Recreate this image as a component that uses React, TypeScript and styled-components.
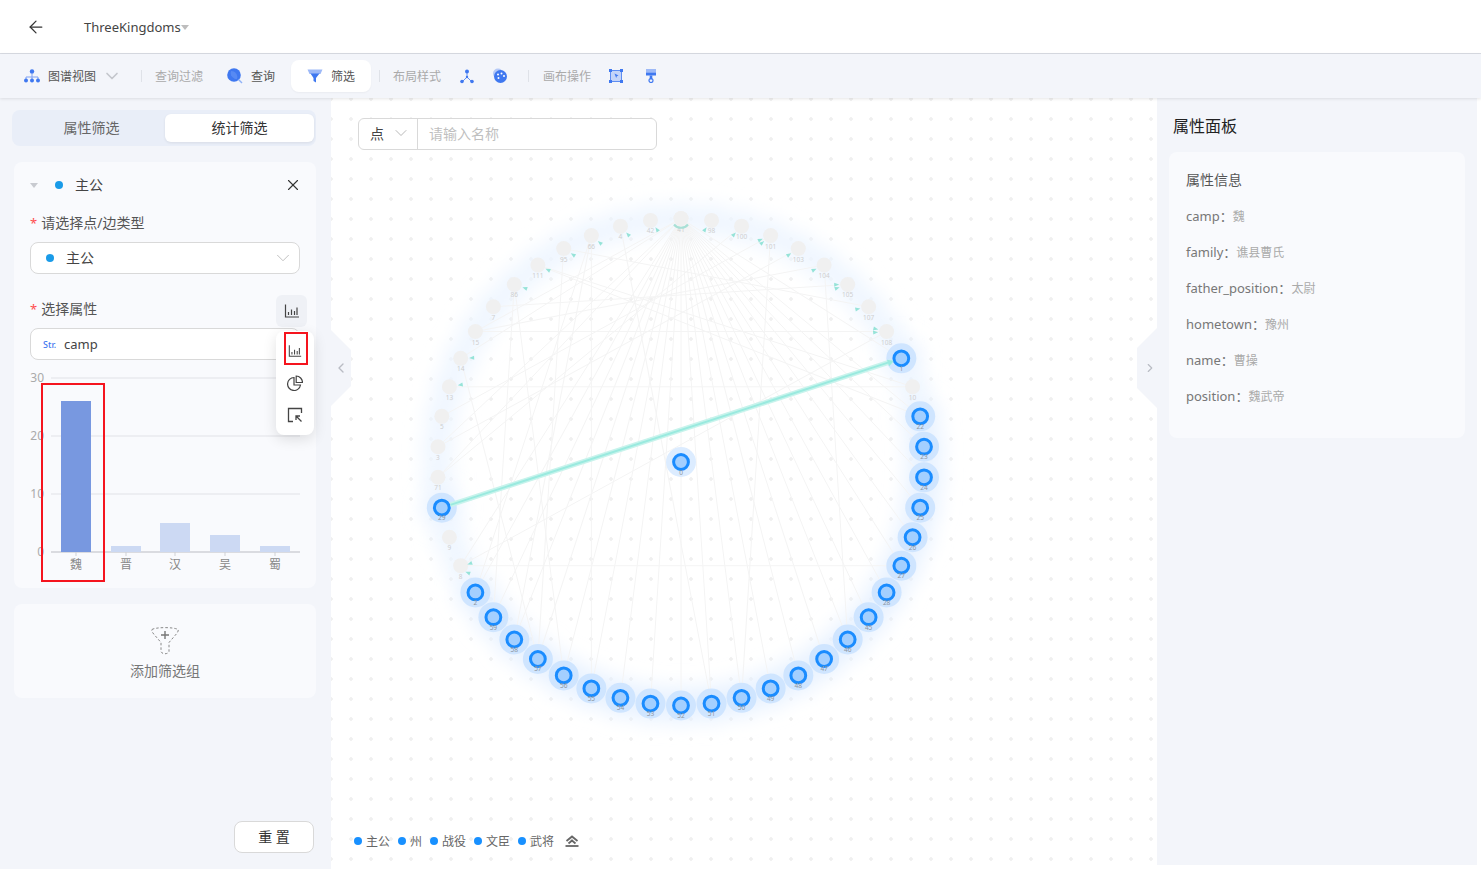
import React from 'react';
import styled, {createGlobalStyle} from 'styled-components';
import {ArrowLeft, ChevronDown, ChevronLeft, ChevronRight, X} from 'lucide-react';

const fontStack = `"Noto Sans", "Noto Sans CJK SC", sans-serif`;

const GlobalStyle = createGlobalStyle`
  html, body {
    margin: 0;
    padding: 0;
    height: 100%;
    background: #fff;
    font-family: ${fontStack};
  }
  * {
    box-sizing: border-box;
  }
`;

const Page = styled.div`
  width: 1481px;
  height: 869px;
  overflow: hidden;
  display: flex;
  flex-direction: column;
  color: #333;
`;

const Header = styled.header`
  height: 54px;
  flex: none;
  display: flex;
  align-items: center;
  padding-left: 26px;
  background: #fff;
  border-bottom: 1px solid #d8dbe2;
`;

const GraphName = styled.div`
  margin-left: 38px;
  font-size: 13px;
  color: #444;
  display: flex;
  align-items: center;
`;

const Caret = styled.span<{$color?: string}>`
  width: 0;
  height: 0;
  margin-top: 1px;
  border-left: 4px solid transparent;
  border-right: 4px solid transparent;
  border-top: 5px solid ${p => p.$color || '#bdbdbd'};
`;

const Toolbar = styled.div`
  height: 44px;
  flex: none;
  display: flex;
  align-items: center;
  padding-left: 24px;
  background: #f3f5fa;
  box-shadow: 0 1px 3px rgba(0, 0, 0, 0.1);
  position: relative;
  z-index: 3;
  font-size: 12px;
`;

const ToolButton = styled.div<{$active?: boolean; $w?: number; $ml?: number}>`
  display: flex;
  align-items: center;
  justify-content: ${p => (p.$active ? 'center' : 'flex-start')};
  gap: 8px;
  height: 32px;
  color: #555;
  ${p => p.$w && `width: ${p.$w}px;`}
  ${p => p.$ml && `margin-left: ${p.$ml}px;`}
  ${p => p.$active && `
    background: #fff;
    border-radius: 8px;
    box-shadow: 0 1px 2px rgba(0, 0, 0, 0.04);
  `}
`;

const ViewChevron = styled.span`
  display: flex;
  margin-left: 6px;
  color: #c4c6cc;
`;

const ToolLabel = styled.span`
  color: #aaa;
  width: 48px;
  white-space: nowrap;
`;

const ToolDivider = styled.span<{$left: number; $right: number}>`
  width: 1px;
  height: 12px;
  background: #dfe2e8;
  margin: 0 ${p => p.$right}px 0 ${p => p.$left}px;
`;

const Body = styled.div`
  flex: 1;
  min-height: 0;
  display: grid;
  grid-template-columns: 331px 826px 320px;
`;

const LeftPanel = styled.aside`
  background: #f3f5fa;
  padding: 12px 15px 0 12px;
  display: flex;
  flex-direction: column;
  height: 100%;
`;

const Tabs = styled.div`
  height: 36px;
  display: grid;
  grid-template-columns: 153px 149px;
  padding: 4px 0;
  background: #e9eef8;
  border-radius: 8px;
  width: 304px;
`;

const Tab = styled.div<{$active?: boolean}>`
  display: flex;
  align-items: center;
  justify-content: center;
  font-size: 14px;
  padding-bottom: 2px;
  color: ${p => (p.$active ? '#333' : '#666')};
  border-radius: 6px;
  ${p => (p.$active ? `
    background: #fff;
    box-shadow: 0 1px 3px rgba(0, 0, 0, 0.08);
  ` : 'padding-left: 6px;')}
`;

const Card = styled.section<{$h: number}>`
  position: relative;
  width: 302px;
  height: ${p => p.$h}px;
  margin-left: 2px;
  background: #f9fafd;
  border-radius: 8px;
`;

const FilterCard = styled(Card)`
  margin-top: 16px;
  padding: 0 16px;
`;

const GroupRow = styled.div`
  height: 46px;
  display: flex;
  align-items: center;
  font-size: 14px;
  color: #444;
`;

const TypeDot = styled.span<{$ml?: number}>`
  width: 8px;
  height: 8px;
  border-radius: 50%;
  background: #1a9be8;
  flex: none;
  margin-left: ${p => p.$ml || 0}px;
`;

const GroupName = styled.span`
  margin-left: 12px;
  margin-bottom: 2px;
`;

const CloseBtn = styled.span`
  margin-left: auto;
  margin-right: -2px;
  display: flex;
  color: #333;
`;

const FieldLabel = styled.div<{$top: number}>`
  margin-top: ${p => p.$top}px;
  height: 20px;
  line-height: 20px;
  font-size: 14px;
  color: #555;
  display: flex;
  justify-content: space-between;
  align-items: center;
  &::before {
    content: '*';
    color: #ff4d4f;
    margin-right: 4px;
    font-size: 13px;
  }
`;

const LabelText = styled.span`
  flex: 1;
`;

const SelectBox = styled.div`
  margin-top: 9px;
  width: 270px;
  height: 32px;
  background: #fff;
  border: 1px solid #d9d9d9;
  border-radius: 8px;
  display: flex;
  align-items: center;
  padding: 0 12px 0 15px;
  font-size: 14px;
  color: #444;
`;

const SelectChevron = styled.span`
  margin-left: auto;
  margin-right: -7px;
  display: flex;
  color: #bbb;
`;

const StrTag = styled.span`
  font-size: 9px;
  font-weight: 500;
  color: #3f78f0;
  width: 21px;
  margin-left: -3px;
`;

const AttrName = styled.span`
  font-size: 13px;
`;

const ChartToggle = styled.span`
  position: absolute;
  left: 262px;
  top: 133px;
  width: 31px;
  height: 32px;
  border-radius: 6px;
  background: #eff1f6;
  display: flex;
  align-items: center;
  justify-content: center;
  color: #444;
`;

const ChartMenu = styled.div`
  position: absolute;
  left: 262px;
  top: 169px;
  width: 38px;
  height: 104px;
  border-radius: 8px;
  background: #fff;
  box-shadow: 0 4px 14px rgba(0, 0, 0, 0.12);
  display: flex;
  flex-direction: column;
  align-items: center;
  padding-top: 4px;
  z-index: 2;
`;

const ChartMenuItem = styled.span`
  height: 32px;
  width: 100%;
  display: flex;
  align-items: center;
  justify-content: center;
  color: #444;
`;

const Marker = styled.span`
  position: absolute;
  border: 2px solid #f5141e;
  pointer-events: none;
  z-index: 3;
`;

const MenuMarker = styled(Marker)`
  left: 270px;
  top: 170px;
  width: 24px;
  height: 33px;
`;

const BarMarker = styled(Marker)`
  left: 27px;
  top: 221px;
  width: 64px;
  height: 199px;
`;

const ChartSvg = styled.svg`
  position: absolute;
  left: 0;
  top: 203px;
`;

const AddCard = styled(Card)`
  margin-top: 16px;
  display: flex;
  flex-direction: column;
  align-items: center;
  padding-top: 21px;
  color: #777;
  font-size: 14px;
`;

const AddLabel = styled.div`
  margin-top: 6px;
  line-height: 20px;
`;

const ResetBtn = styled.button`
  margin: auto 0 16px 222px;
  width: 80px;
  height: 32px;
  padding: 0 0 2px;
  background: #fff;
  border: 1px solid #d9d9d9;
  border-radius: 8px;
  font-family: ${fontStack};
  font-size: 14px;
  color: #333;
  flex: none;
`;

const Canvas = styled.main`
  position: relative;
  overflow: hidden;
  background-color: #fff;
  background-image: radial-gradient(circle at 10px 10px, #f0f0f0 1.5px, transparent 2px);
  background-size: 20px 20px;
  background-position: -10px -9px;
`;

const GraphSvg = styled.svg`
  position: absolute;
  left: 0;
  top: 0;
`;

const SearchBar = styled.div`
  position: absolute;
  left: 27px;
  top: 20px;
  width: 299px;
  height: 32px;
  background: #fff;
  border: 1px solid #d9d9d9;
  border-radius: 6px;
  display: flex;
  font-size: 14px;
`;

const SearchType = styled.div`
  width: 59px;
  border-right: 1px solid #d9d9d9;
  display: flex;
  align-items: center;
  justify-content: space-between;
  padding: 0 6px 2px 11px;
  color: #444;
`;

const SearchInput = styled.div`
  padding: 0 0 2px 11px;
  color: #bfbfbf;
  display: flex;
  align-items: center;
`;

const Legend = styled.div`
  position: absolute;
  left: 23px;
  bottom: 18px;
  height: 20px;
  display: flex;
  align-items: center;
  gap: 8px;
  font-size: 12px;
  color: #666;
`;

const LegendItem = styled.span`
  display: flex;
  align-items: center;
  gap: 4px;
  &::before {
    content: '';
    width: 8px;
    height: 8px;
    border-radius: 50%;
    background: #1890ff;
  }
`;

const LegendToggle = styled.span`
  display: flex;
  margin-left: 3px;
  color: #666;
`;

const Handle = styled.div<{$side: 'left' | 'right'}>`
  position: absolute;
  top: ${p => (p.$side === 'left' ? 232 : 230)}px;
  ${p => p.$side}: 0;
  width: 20px;
  height: ${p => (p.$side === 'left' ? 76 : 80)}px;
  padding-left: ${p => (p.$side === 'left' ? 0 : 6)}px;
  background: #f3f5fa;
  clip-path: ${p =>
    p.$side === 'left'
      ? 'polygon(0 0, 100% 20px, 100% calc(100% - 20px), 0 100%)'
      : 'polygon(100% 0, 0 20px, 0 calc(100% - 20px), 100% 100%)'};
  display: flex;
  align-items: center;
  justify-content: center;
  color: #b9bcc4;
`;

const RightPanel = styled.aside`
  background: #f3f5fa;
  padding: 18px 12px 0 12px;
  height: calc(100% - 4px);
`;

const PanelTitle = styled.h2`
  margin: 0 0 0 4px;
  font-size: 16px;
  line-height: 20px;
  font-weight: 400;
  color: #222;
`;

const InfoCard = styled.section`
  margin-top: 16px;
  height: 286px;
  background: #f9fafd;
  border-radius: 8px;
  padding: 18px 17px 0;
`;

const InfoTitle = styled.div`
  font-size: 14px;
  line-height: 20px;
  color: #555;
  margin-bottom: 7px;
`;

const InfoRow = styled.div`
  height: 36px;
  display: flex;
  align-items: center;
  font-size: 13px;
  color: #777;
`;

const InfoValue = styled.span`
  font-size: 12px;
  color: #aaa;
  margin-top: 2px;
`;

// --- icons ---

const BLUE = '#3f78f0';

const TreeIcon = () => (
  <svg width="16" height="14" viewBox="0 0 16 14">
    <circle cx="8" cy="2.5" r="2.2" fill={BLUE} />
    <path d="M8 4v4M2 11V8h12v3M8 8v3" stroke="#7ea1f3" strokeWidth="1" fill="none" />
    <circle cx="2" cy="11.5" r="2" fill={BLUE} />
    <circle cx="8" cy="11.5" r="2" fill={BLUE} />
    <circle cx="14" cy="11.5" r="2" fill={BLUE} />
  </svg>
);

const SearchIcon = () => (
  <svg width="16" height="16" viewBox="0 0 16 16">
    <circle cx="7" cy="7" r="6.8" fill="#3f78f0" />
    <path d="M4 3a6 6 0 0 1 6 8 6 6 0 0 1-6-8z" fill="#6f9bf5" opacity=".5" />
    <path d="M11.5 11.5L15 15" stroke="#8fb2f7" strokeWidth="1.4" />
  </svg>
);

const FunnelIcon = () => (
  <svg width="16" height="14" viewBox="0 0 16 14">
    <path d="M0.5 0.5h15l-2 4.5H2.5z" fill="#9db9f7" />
    <path d="M3.5 4.5h9L9 9v4.5L6.5 12V9z" fill={BLUE} />
  </svg>
);

const LayoutIcon = () => (
  <svg width="14" height="15" viewBox="0 0 14 15">
    <path d="M7 3v5M7 8l-4 4M7 8l4 4" stroke={BLUE} strokeWidth=".8" fill="none" />
    <circle cx="7" cy="2.5" r="2" fill={BLUE} />
    <circle cx="7" cy="8" r="1.2" fill={BLUE} />
    <circle cx="2" cy="12.5" r="1.8" fill={BLUE} />
    <circle cx="12" cy="12.5" r="1.8" fill={BLUE} />
  </svg>
);

const PaletteIcon = () => (
  <svg width="16" height="16" viewBox="0 0 16 16">
    <circle cx="6" cy="5.5" r="5" fill="#b5c9f7" />
    <circle cx="8.5" cy="8.5" r="6.5" fill={BLUE} />
    <circle cx="6" cy="6.5" r="1" fill="#fff" />
    <circle cx="9.5" cy="5.5" r="1" fill="#fff" />
    <circle cx="12" cy="8" r="1" fill="#fff" />
    <circle cx="6.5" cy="10" r="1" fill="#fff" />
  </svg>
);

const FrameIcon = () => (
  <svg width="14" height="14" viewBox="0 0 14 14">
    <rect x="1.5" y="1.5" width="11" height="11" fill="#c4d4f8" stroke={BLUE} strokeWidth=".8" />
    <rect x="0" y="0" width="3" height="3" fill={BLUE} />
    <rect x="11" y="0" width="3" height="3" fill={BLUE} />
    <rect x="0" y="11" width="3" height="3" fill={BLUE} />
    <rect x="11" y="11" width="3" height="3" fill={BLUE} />
    <path d="M5.5 4.5l4 2-1.7.7-.6 1.8z" fill={BLUE} />
  </svg>
);

const BrushIcon = () => (
  <svg width="12" height="14" viewBox="0 0 12 14">
    <rect x="1" y="0" width="10" height="3.5" fill="#9db9f7" />
    <rect x="1" y="3.5" width="10" height="3" fill={BLUE} />
    <rect x="4.7" y="6.5" width="2.6" height="4" fill={BLUE} />
    <circle cx="6" cy="11.5" r="2" fill="none" stroke={BLUE} strokeWidth="1.2" />
  </svg>
);

const BarChartIcon = ({size = 16}: {size?: number}) => (
  <svg width={size} height={size} viewBox="0 0 16 16" fill="none" stroke="currentColor">
    <path d="M1.5 1.5v12.5h13.5" strokeWidth="1.2" />
    <path d="M4.5 9v3M7.5 6.5v5.5M10.5 8v4M13 4.5v7.5" strokeWidth="1.2" />
  </svg>
);

const PieIcon = () => (
  <svg width="16" height="16" viewBox="0 0 16 16" fill="none" stroke="currentColor" strokeWidth="1.2">
    <path d="M7 2.5a6.5 6.5 0 1 0 6.5 7.5H7z" />
    <path d="M9.2 1v6.5H15.5A6.5 6.5 0 0 0 9.2 1z" />
  </svg>
);

const SelectAreaIcon = () => (
  <svg width="16" height="16" viewBox="0 0 16 16" fill="none" stroke="currentColor" strokeWidth="1.3">
    <path d="M6 14.5H1.5V1.5h13V6" />
    <path d="M14.5 14.5L9 9M9 13V9h4" />
  </svg>
);

const AddFilterIcon = () => (
  <svg width="30" height="30" viewBox="0 0 30 30" fill="none">
    <path
      d="M2 4.5C6 2 24 2 28 4.5c1 1-1 4-3 6l-6 7v9c-1 3-7 3-8 0v-9l-6-7c-2-2-4-5-3-6z"
      stroke="#888"
      strokeWidth="1"
      strokeDasharray="2.5 2"
    />
    <path d="M15 6v8M11 10h8" stroke="#777" strokeWidth="1.4" />
  </svg>
);

const CollapseUpIcon = () => (
  <svg width="14" height="12" viewBox="0 0 14 12" fill="none" stroke="currentColor" strokeWidth="1.8">
    <path d="M1.5 6L7 1.5 12.5 6" />
    <path d="M3.5 8.5L7 5.5l3.5 3" />
    <path d="M0.5 11h13" />
  </svg>
);

// --- chart ---

const BARS = [
  {label: '魏', x: 47, top: 196, fill: '#7898e0'},
  {label: '晋', x: 97, top: 341, fill: '#ccd9f3'},
  {label: '汉', x: 146, top: 318, fill: '#ccd9f3'},
  {label: '吴', x: 196, top: 330, fill: '#ccd9f3'},
  {label: '蜀', x: 246, top: 341, fill: '#ccd9f3'},
];

const StatChart = () => (
  <ChartSvg width="302" height="230" viewBox="0 160 302 230">
    {[173, 231, 289].map(y => (
      <line key={y} x1="37" x2="286" y1={y} y2={y} stroke="#e8eaee" strokeWidth="1.5" />
    ))}
    <line x1="37" x2="286" y1="347" y2="347" stroke="#cfd1d6" strokeWidth="1.5" />
    {[['30', 173], ['20', 231], ['10', 289], ['0', 347]].map(([t, y]) => (
      <text key={t} x="30" y={Number(y) + 4} textAnchor="end" fontSize="12" fill="#aaa" fontFamily={fontStack}>
        {t}
      </text>
    ))}
    {BARS.map(b => (
      <g key={b.label}>
        <rect x={b.x} y={b.top} width="30" height={347 - b.top} fill={b.fill} />
        <line x1={b.x + 15} x2={b.x + 15} y1="347" y2="351" stroke="#cfd1d6" />
        <text x={b.x + 15} y="364" textAnchor="middle" fontSize="12" fill="#888" fontFamily={fontStack}>
          {b.label}
        </text>
      </g>
    ))}
  </ChartSvg>
);

// --- graph ---

const CX = 350;
const CY = 364;
const R = 243.5;

// clockwise from the bottom, walking up the right side
const NODE_IDS = [
  52, 51, 50, 49, 48, 47, 46, 45, 28, 27, 26, 25, 24, 23, 22, 10, 1, 108, 107, 105, 104, 103, 101, 100, 98, 41, 42, 4,
  66, 95, 111, 86, 7, 15, 14, 13, 5, 3, 71, 29, 9, 8, 2, 59, 58, 57, 56, 55, 54, 53,
];
const FADED = new Set([
  10, 108, 107, 105, 104, 103, 101, 100, 98, 41, 42, 4, 66, 95, 111, 86, 7, 15, 14, 13, 5, 3, 71, 9, 8,
]);

const pos = (k: number) => {
  const a = ((90 - 7.2 * k) * Math.PI) / 180;
  return {x: CX + R * Math.cos(a), y: CY + R * Math.sin(a)};
};

const TOP = 25;
const nodes = NODE_IDS.map((id, k) => ({id, k, ...pos(k), faded: FADED.has(id)}));

// edge list as node slots on the ring
const FAN_EDGES = [
  0, 1, 2, 3, 4, 5, 6, 7, 8, 9, 10, 11, 12, 13, 14, 16, 41, 42, 43, 44, 45, 46, 47, 48, 49, 38, 37, 34, 33,
];
const CROSS_EDGES: [number, number][] = [
  [34, 45], [33, 20], [31, 46], [30, 14], [29, 18], [28, 47], [28, 44], [27, 1], [37, 21], [38, 23], [36, 22],
  [41, 9], [41, 17], [42, 28], [43, 31], [45, 29], [22, 2], [20, 6], [19, 32], [17, 33], [15, 30], [35, 15],
];
const ARROW_SLOTS = [17, 18, 19, 20, 21, 22, 23, 24, 26, 27, 28, 29, 30, 31, 34, 35];
const DOUBLE_ARROW = new Set([17, 19, 22]);

const arrowAt = (x: number, y: number, rot: number, key: string) => (
  <path key={key} d="M-2.5 -2L2.5 0L-2.5 2z" fill="#96e3d8" transform={`translate(${x} ${y}) rotate(${rot})`} />
);

const ringArrow = (k: number, spread: number, key: string) => {
  const n = pos(k);
  const ang = (Math.atan2(CY - n.y, CX - n.x) * 180) / Math.PI;
  const off = ang + (k > TOP ? -spread : spread);
  const rad = (off * Math.PI) / 180;
  return arrowAt(n.x + 11 * Math.cos(rad), n.y + 11 * Math.sin(rad), off + 180, key);
};

const GraphCanvas = () => {
  const top = pos(TOP);
  const a = pos(39);
  const b = pos(16);
  const len = Math.hypot(b.x - a.x, b.y - a.y);
  const ux = (b.x - a.x) / len;
  const uy = (b.y - a.y) / len;
  const start = {x: a.x + ux * 9, y: a.y + uy * 9};
  const end = {x: b.x - ux * 10, y: b.y - uy * 10};
  const edgeAngle = (Math.atan2(uy, ux) * 180) / Math.PI;
  return (
    <GraphSvg width="826" height="771" viewBox="0 0 826 771">
      <defs>
        <filter id="glow" x="-30%" y="-30%" width="160%" height="160%">
          <feGaussianBlur stdDeviation="10" />
        </filter>
        <filter id="softGlow" x="-30%" y="-30%" width="160%" height="160%">
          <feGaussianBlur stdDeviation="10" />
        </filter>
      </defs>

      <g filter="url(#softGlow)">
        {nodes.filter(n => n.faded).map(n => (
          <circle key={n.id} cx={n.x} cy={n.y} r="16" fill="#edf5ff" />
        ))}
      </g>
      <g filter="url(#glow)">
        {nodes.filter(n => !n.faded).map(n => (
          <circle key={n.id} cx={n.x} cy={n.y} r="19" fill="#e6f1ff" />
        ))}
      </g>

      <g stroke="#f4f4f4" strokeWidth="1">
        {FAN_EDGES.map(k => {
          const p = pos(k);
          return <line key={k} x1={top.x} y1={top.y} x2={p.x} y2={p.y} />;
        })}
        {CROSS_EDGES.map(([s, e]) => {
          const p = pos(s);
          const q = pos(e);
          return <line key={`${s}-${e}`} x1={p.x} y1={p.y} x2={q.x} y2={q.y} />;
        })}
      </g>

      {nodes.filter(n => n.faded).map(n => (
        <g key={n.id}>
          <circle cx={n.x} cy={n.y} r="7.5" fill="#f0f0f0" />
          <text x={n.x} y={n.y + 13} textAnchor="middle" fontSize="6.5" fill="#cfcfcf" fontFamily={fontStack}>
            {n.id}
          </text>
        </g>
      ))}
      <circle cx={top.x} cy={top.y} r="7.5" fill="#f0f0f0" />
      <path d={`M${top.x - 7} ${top.y + 6}a9 9 0 0 0 14 0`} fill="none" stroke="#a9e0d6" strokeWidth="2" />

      {ARROW_SLOTS.map(k => ringArrow(k, 28, `a${k}`))}
      {ARROW_SLOTS.filter(k => DOUBLE_ARROW.has(k)).map(k => ringArrow(k, 46, `b${k}`))}
      {arrowAt(pos(41).x + 9, pos(41).y - 2, 160, 'a41')}
      {arrowAt(pos(41).x + 7, pos(41).y + 7, 200, 'a41b')}

      {nodes.filter(n => !n.faded).map(n => (
        <g key={n.id}>
          <circle cx={n.x} cy={n.y} r="15" fill="#cfe5ff" />
          <circle cx={n.x} cy={n.y} r="7.4" fill="#a3cfff" stroke="#1a8cff" strokeWidth="3" />
          <text x={n.x} y={n.y + 12.5} textAnchor="middle" fontSize="6.5" fill="#8a94a0" fontFamily={fontStack}>
            {n.id}
          </text>
        </g>
      ))}
      <circle cx={CX} cy={CY} r="15" fill="#dcecff" />
      <circle cx={CX} cy={CY} r="7.4" fill="#a3cfff" stroke="#1a8cff" strokeWidth="3" />
      <text x={CX} y={CY + 12.5} textAnchor="middle" fontSize="6.5" fill="#8a94a0" fontFamily={fontStack}>
        0
      </text>

      <line x1={start.x} y1={start.y} x2={end.x} y2={end.y} stroke="#c8f3ec" strokeWidth="5" />
      <line x1={start.x} y1={start.y} x2={end.x} y2={end.y} stroke="#9aeadf" strokeWidth="2" />
      <path d="M-5 -3.5L1 0L-5 3.5z" fill="#9aeadf" transform={`translate(${end.x + 1} ${end.y}) rotate(${edgeAngle})`} />
    </GraphSvg>
  );
};

const PROPS = [
  ['camp', '魏'],
  ['family', '谯县曹氏'],
  ['father_position', '太尉'],
  ['hometown', '豫州'],
  ['name', '曹操'],
  ['position', '魏武帝'],
];

const LEGEND = ['主公', '州', '战役', '文臣', '武将'];

const App = () => {
  return (
    <Page>
      <GlobalStyle />
      <Header>
        <ArrowLeft size={20} strokeWidth={1.5} color="#333" />
        <GraphName>
          ThreeKingdoms
          <Caret />
        </GraphName>
      </Header>

      <Toolbar>
        <ToolButton>
          <TreeIcon />
          图谱视图
        </ToolButton>
        <ViewChevron>
          <ChevronDown size={20} />
        </ViewChevron>
        <ToolDivider $left={19} $right={13} />
        <ToolLabel>查询过滤</ToolLabel>
        <ToolButton $ml={24} $w={64}>
          <SearchIcon />
          查询
        </ToolButton>
        <ToolButton $active $w={80}>
          <FunnelIcon />
          筛选
        </ToolButton>
        <ToolDivider $left={8} $right={13} />
        <ToolLabel>布局样式</ToolLabel>
        <ToolButton $ml={19}>
          <LayoutIcon />
        </ToolButton>
        <ToolButton $ml={18}>
          <PaletteIcon />
        </ToolButton>
        <ToolDivider $left={20} $right={14} />
        <ToolLabel>画布操作</ToolLabel>
        <ToolButton $ml={18}>
          <FrameIcon />
        </ToolButton>
        <ToolButton $ml={22}>
          <BrushIcon />
        </ToolButton>
      </Toolbar>

      <Body>
        <LeftPanel>
          <Tabs>
            <Tab>属性筛选</Tab>
            <Tab $active>统计筛选</Tab>
          </Tabs>

          <FilterCard $h={426}>
            <GroupRow>
              <Caret $color="#c8cad0" />
              <TypeDot $ml={17} />
              <GroupName>主公</GroupName>
              <CloseBtn>
                <X size={18} strokeWidth={1.5} />
              </CloseBtn>
            </GroupRow>
            <FieldLabel $top={5}>
              <LabelText>请选择点/边类型</LabelText>
            </FieldLabel>
            <SelectBox>
              <TypeDot />
              <GroupName>主公</GroupName>
              <SelectChevron>
                <ChevronDown size={22} strokeWidth={1} />
              </SelectChevron>
            </SelectBox>
            <FieldLabel $top={25}>
              <LabelText>选择属性</LabelText>
            </FieldLabel>
            <SelectBox>
              <StrTag>Str.</StrTag>
              <AttrName>camp</AttrName>
            </SelectBox>
            <StatChart />
            <ChartToggle>
              <BarChartIcon />
            </ChartToggle>
            <ChartMenu>
              <ChartMenuItem>
                <BarChartIcon size={14} />
              </ChartMenuItem>
              <ChartMenuItem>
                <PieIcon />
              </ChartMenuItem>
              <ChartMenuItem>
                <SelectAreaIcon />
              </ChartMenuItem>
            </ChartMenu>
            <MenuMarker />
            <BarMarker />
          </FilterCard>

          <AddCard $h={94}>
            <AddFilterIcon />
            <AddLabel>添加筛选组</AddLabel>
          </AddCard>

          <ResetBtn>重 置</ResetBtn>
        </LeftPanel>

        <Canvas>
          <GraphCanvas />
          <SearchBar>
            <SearchType>
              点
              <ChevronDown size={20} strokeWidth={1} color="#aaa" />
            </SearchType>
            <SearchInput>请输入名称</SearchInput>
          </SearchBar>
          <Handle $side="left">
            <ChevronLeft size={16} />
          </Handle>
          <Handle $side="right">
            <ChevronRight size={16} />
          </Handle>
          <Legend>
            {LEGEND.map(l => (
              <LegendItem key={l}>{l}</LegendItem>
            ))}
            <LegendToggle>
              <CollapseUpIcon />
            </LegendToggle>
          </Legend>
        </Canvas>

        <RightPanel>
          <PanelTitle>属性面板</PanelTitle>
          <InfoCard>
            <InfoTitle>属性信息</InfoTitle>
            {PROPS.map(([k, v]) => (
              <InfoRow key={k}>
                {k}：<InfoValue>{v}</InfoValue>
              </InfoRow>
            ))}
          </InfoCard>
        </RightPanel>
      </Body>
    </Page>
  );
};

export default App;
